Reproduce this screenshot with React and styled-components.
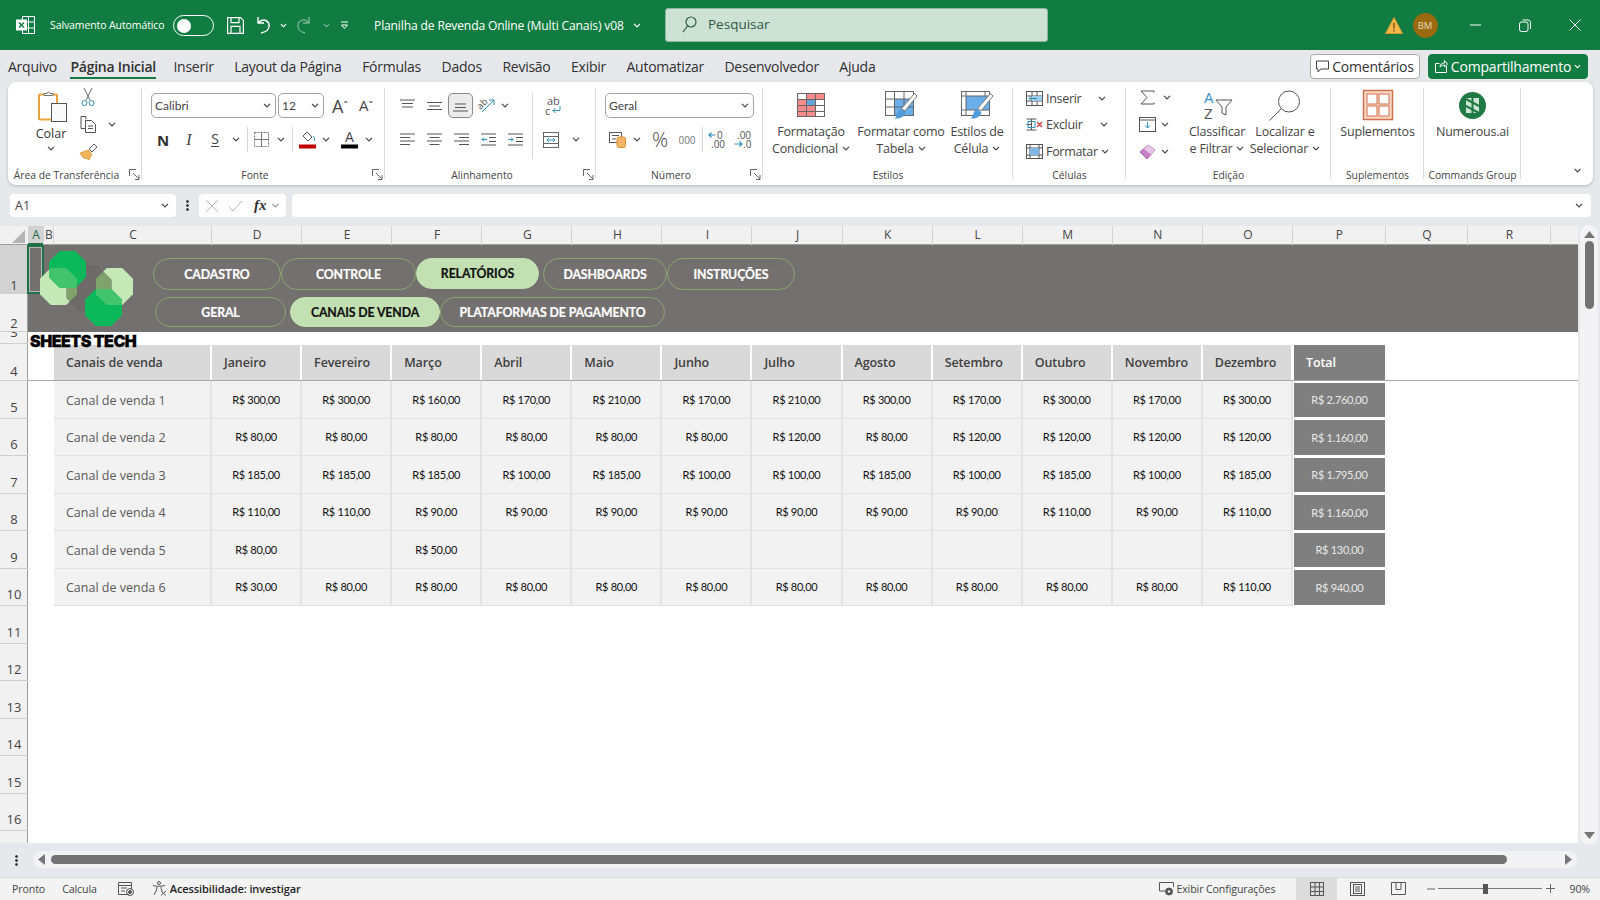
import React from "react";
import styled, { createGlobalStyle } from "styled-components";

const Global = createGlobalStyle`
  html, body { margin: 0; padding: 0; background: #e6e8ec; }
  * { box-sizing: border-box; }
  svg { display: block; flex: none; overflow: visible; }
`;

const UI = `"Open Sans", "Noto Sans", sans-serif`;
const CAL = `Lato, "Open Sans", sans-serif`;

const Page = styled.div`
  width: 1600px; height: 900px; overflow: hidden; display: flex; flex-direction: column;
  background: #e6e8ec; font-family: ${UI}; color: #333;
`;

/* ---------- title bar ---------- */
const TitleBar = styled.header`
  height: 50px; flex: none; background: #107c41; color: #fff; display: flex; align-items: center; padding-left: 16px;
`;
const AutoSave = styled.span`
  font-size: 10.5px; margin: 0 9px 0 15px; width: 114px; white-space: nowrap; letter-spacing: -0.1px;
`;
const Toggle = styled.span`
  width: 41px; height: 21px; border: 1.5px solid #fff; border-radius: 11px; padding: 2px; display: flex; margin-right: 13px;
  &::before { content: ""; width: 14px; height: 14px; margin: 1px 0 0 1px; border-radius: 50%; background: #fff; }
`;
const QuickSlot = styled.span`
  width: ${p => p.$w}px; display: flex; justify-content: center; align-items: center; opacity: ${p => p.$dim ? 0.45 : 1};
`;
const DocTitle = styled.span`
  font-size: 12.1px; white-space: nowrap; width: 258px; margin-left: 15px; letter-spacing: -0.15px;
`;
const SearchBox = styled.div`
  width: 383px; height: 34px; margin-left: 23px; background: #cde2d5; border-radius: 3px; border: 1px solid #8fb5a0;
  display: flex; align-items: center; gap: 11px; padding: 0 0 2px 16px; color: #2f5a43; font-size: 13.5px;
`;
const TitleRight = styled.div`
  margin-left: auto; display: flex; align-items: center;
`;
const Avatar = styled.span`
  width: 25px; height: 25px; border-radius: 50%; background: #9a6a10; color: #e8d8b8; font-size: 9.5px;
  display: flex; align-items: center; justify-content: center; margin: 0 12.5px 0 9.5px;
`;
const WinBtn = styled.span`
  width: ${p => p.$w}px; display: flex; justify-content: center;
`;

/* ---------- tabs ---------- */
const MenuBar = styled.nav`
  height: 32px; flex: none; display: flex; align-items: center; padding-left: 8px; gap: 20.5px;
`;
const MenuItem = styled.span`
  font-size: 14px; line-height: 34px; height: 32px; color: #303030; white-space: nowrap; letter-spacing: -0.25px;
  font-weight: ${p => p.$active ? 600 : 400}; margin-right: ${p => p.$mr || 0}px;
  ${p => p.$active && `box-shadow: inset 0 -3px 0 0 #e6e8ec, inset 0 -5px 0 0 #107c41;`}
`;
const MenuRight = styled.div`
  margin-left: auto; display: flex; gap: 8px; padding-right: 12px;
`;
const CommentBtn = styled.span`
  width: 110px; height: 25px; border-radius: 4px; background: #fff; border: 1px solid #a9a9a9; display: flex; align-items: center;
  justify-content: center; gap: 3px; font-size: 14px; letter-spacing: -0.2px; color: #333;
`;
const ShareBtn = styled(CommentBtn)`
  width: 160px; background: #107c41; border-color: #107c41; color: #fff;
`;

/* ---------- ribbon ---------- */
const Ribbon = styled.div`
  height: 103px; flex: none; margin-left: 8px; width: 1585px; background: #fff; border-radius: 8px;
  box-shadow: 0 1px 3px rgba(0,0,0,.22); display: flex;
`;
const Group = styled.section`
  width: ${p => p.$w}px; flex: none; height: 103px; display: flex; flex-direction: column;
  background: linear-gradient(#dedede, #dedede) no-repeat right 0 top 6px / 1px 91px;
`;
const GroupBody = styled.div`
  height: 84px; flex: none; display: flex; padding-left: ${p => p.$pl || 0}px; padding-top: ${p => p.$pt || 0}px;
`;
const LabelRow = styled.div`
  height: 17px; display: flex; align-items: center; font-size: 10.3px; color: #444;
`;
const LabelText = styled.span`
  flex: 1; text-align: center; white-space: nowrap;
`;
const Launcher = styled.span`
  width: 17px; padding-left: 4px; display: flex; justify-content: flex-start;
`;
const PasteCol = styled.div`
  width: 46px; margin-left: 20px; display: flex; flex-direction: column; align-items: center; padding-top: 8px; font-size: 12.5px;
  & > svg:first-child { margin-left: 4px; }
  & > span { margin-top: 3px; line-height: 17px; }
  & > svg:last-child { margin-top: 4px; }
`;
const ClipCol = styled.div`
  display: grid; grid-template-columns: 28px 20px; grid-auto-rows: 27px; padding-top: 2px; justify-items: center; align-items: center;
`;
const StackCol = styled.div`
  display: flex; flex-direction: column;
  width: ${p => p.$w ? `${p.$w}px` : "auto"};
`;
const ToolRow = styled.div`
  display: flex; align-items: center; height: 25px; margin-top: ${p => p.$mt || 0}px;
`;
const Tool = styled.span`
  width: ${p => p.$w}px; height: 25px; flex: none; display: flex; align-items: center; justify-content: center; color: #444;
  ${p => p.$on && `background:#ececec; border:1px solid #8a8a8a; border-radius:5px;`}
`;
const Letter = styled.span`
  font-family: "Liberation Serif", serif; font-size: ${p => p.$s || 15}px; font-style: ${p => p.$i ? "italic" : "normal"};
  line-height: 1;
`;
const Bold = styled.span`
  font-size: 15px; font-weight: 700; color: #333;
`;
const UnderS = styled.span`
  font-size: 14px; color: #444; border-bottom: 1px solid #444; line-height: 14px;
`;
const Glyph = styled.span`
  font-size: ${p => p.$s}px; color: ${p => p.$c || "#444"}; line-height: 1; font-family: ${p => p.$f || UI};
  font-weight: ${p => p.$wt || 400};
`;
const Divider = styled.span`
  width: ${p => p.$w}px; height: ${p => p.$h || 25}px; flex: none; 
  background: linear-gradient(#d8d8d8, #d8d8d8) no-repeat center / 1px 100%;
`;
const Select = styled.span`
  width: ${p => p.$w}px; height: 25px; flex: none; border: 1px solid #a3a3a3; border-radius: 5px; display: flex; align-items: center;
  justify-content: space-between; padding: 0 4px 0 3px; font-size: 12px; color: #444; margin-right: ${p => p.$mr || 0}px;
  font-family: ${p => p.$f || UI};
`;
const BigButton = styled.div`
  width: ${p => p.$w}px; flex: none; display: flex; flex-direction: column; align-items: center; padding-top: 8px;
`;
const BigIcon = styled.div`
  height: 30px; margin-bottom: 4px; display: flex; align-items: center; justify-content: center;
`;
const BigText = styled.div`
  font-size: 12.5px; line-height: 16.5px; text-align: center; white-space: nowrap; color: #444; letter-spacing: -0.2px;
  & svg { display: inline-block; margin-left: 4px; vertical-align: 2px; }
`;
const CellRow = styled.div`
  height: 26.5px; display: flex; align-items: center; padding-left: 13px; font-size: 12.5px; color: #444; letter-spacing: -0.3px;
`;
const CellLabel = styled.span`
  width: ${p => p.$w}px; margin-left: 3px; white-space: nowrap;
`;
const Collapse = styled.div`
  flex: 1; display: flex; justify-content: flex-end; align-items: flex-end; padding: 0 10px 12px 0;
`;

/* ---------- formula bar ---------- */
const FormulaBar = styled.div`
  height: 23px; flex: none; margin-top: 9px; padding: 0 9px 0 10px; display: flex; align-items: center;
`;
const NameBox = styled.div`
  width: 166px; height: 23px; background: #fff; border-radius: 4px; display: flex; align-items: center; justify-content: space-between;
  padding: 0 5px 0 5px; font-size: 12.5px; color: #444;
`;
const FxDots = styled.span`
  width: 23px; display: flex; justify-content: center;
`;
const FxBox = styled.div`
  width: 87px; height: 23px; background: #fff; border-radius: 4px; display: flex; align-items: center; gap: 9px; padding-left: 6px;
  margin-right: 6px;
`;
const FxText = styled.span`
  font-family: "Liberation Serif", serif; font-style: italic; font-weight: 700; font-size: 15px; color: #333; margin-left: 2px; margin-right: -5px;
`;
const FormulaInput = styled.div`
  flex: 1; height: 23px; background: #fff; border-radius: 4px; display: flex; align-items: center; justify-content: flex-end; padding-right: 6px;
`;

/* ---------- sheet ---------- */
const SheetWrap = styled.div`
  height: 617px; flex: none; margin-top: 9px; display: flex;
`;
const Sheet = styled.div`
  width: 1578px; flex: none; background: #fff; display: flex; flex-direction: column; overflow: hidden;
`;
const ColHeader = styled.div`
  height: 19px; flex: none; display: flex; background: #f1f1f1; box-shadow: inset 0 -1px 0 #9e9e9e;
`;
const Corner = styled.span`
  width: 28px; display: flex; justify-content: flex-end; align-items: flex-end; padding: 0 3px 2px 0;
  &::before { content: ""; border-style: solid; border-width: 0 0 13px 13px; border-color: transparent transparent #b4b4b4 transparent; }
`;
const ColCell = styled.span`
  width: ${p => p.$w}px; flex: none; text-align: center; font-size: 12px; line-height: 18px; color: #444;
  background: ${p => p.$sel ? "#d2d2d2" : "transparent"}; ${p => p.$sel && "color:#1a6b3e;"}
  box-shadow: inset -1px 0 0 #d4d4d4, ${p => p.$sel ? "inset 0 -2px 0 #1f7246" : "inset 0 -1px 0 #9e9e9e"};
`;
const SheetBody = styled.div`
  flex: 1; display: flex; min-height: 0;
`;
const RowHeaders = styled.div`
  width: 28px; flex: none; background: #f1f1f1; box-shadow: inset -1px 0 0 #9e9e9e; overflow: hidden;
`;
const RowHead = styled.div`
  height: ${p => p.$h}px; display: flex; align-items: flex-end; justify-content: center; font-size: 13px; line-height: 17px; color: #444;
  overflow: hidden; padding-bottom: ${p => p.$pb}px;
  background: ${p => p.$sel ? "#d2d2d2" : "transparent"};
  box-shadow: inset 0 -1px 0 #cfcfcf, inset -1px 0 0 #9e9e9e;
`;
const Cells = styled.div`
  flex: 1; min-width: 0; position: relative;
`;
const SelectedCell = styled.span`
  position: absolute; left: -1px; top: 0; width: 17px; height: 49px; border: 2px solid #1f7246; z-index: 1;
  box-shadow: inset 0 0 0 1px rgba(255,255,255,.5);
`;
const Banner = styled.div`
  height: 87px; background: #74706f; display: flex;
`;
const LogoSlot = styled.div`
  position: relative; z-index: 2; width: 125px; flex: none;
`;
const PillRows = styled.div`
  display: flex; flex-direction: column; gap: 7px; padding-top: 13px;
`;
const PillRow = styled.div`
  display: flex; gap: ${p => p.$gap || 0}px; margin-left: ${p => p.$ml || 0}px;
`;
const Pill = styled.span`
  width: ${p => p.$w}px; height: ${p => p.$h || 32}px; border-radius: 17px; display: flex; align-items: center; justify-content: center;
  font-family: ${CAL}; font-weight: 700; font-size: 12.3px; letter-spacing: -0.1px; white-space: nowrap;
  -webkit-text-stroke: 0.2px currentColor;
  border: 1px solid ${p => p.$on ? "#c2e0b2" : "#8aa56d"};
  background: ${p => p.$on ? "#c2e0b2" : "transparent"};
  color: ${p => p.$on ? "#111" : "#fff"};
  margin-left: ${p => p.$ml || 0}px;
`;
const BrandRow = styled.div`
  height: 12px; padding-left: 2px; overflow: visible; position: relative; z-index: 2;
`;
const Brand = styled.span`
  font-family: Inter, sans-serif; font-weight: 900; font-size: 16px; line-height: 12px; color: #000; letter-spacing: -0.5px; white-space: nowrap;
  display: block; padding-top: 3px; height: 12px; -webkit-text-stroke: 0.3px #000;
`;
const TableHead = styled.div`
  height: 37px; display: flex; padding: 1px 0 1px 26px; box-shadow: inset 0 -1px 0 #a8a8a8;
`;
const HeadCell = styled.span`
  width: ${p => p.$w}px; flex: none; margin-right: ${p => p.$total ? 0 : 2}px; margin-left: ${p => p.$total ? 1 : 0}px; height: 35px; padding-left: 12px; display: flex; align-items: center;
  font-size: 12.5px; font-weight: 600; letter-spacing: -0.1px;
  background: ${p => p.$total ? "#7f7f7f" : "#d9d9d9"}; color: ${p => p.$total ? "#fff" : "#404040"};
`;
const DataRow = styled.div`
  height: 37.5px; display: flex; padding-left: 26px;
`;
const LabelCell = styled.span`
  width: 158px; flex: none; background: #f2f2f2; border-right: 2px solid #e4e4e4; border-bottom: 1px solid #e2e2e2;
  padding: 1.5px 0 0 12px; display: flex; align-items: center; font-size: 12.5px; color: #595959;
`;
const ValueCell = styled.span`
  width: 90.08px; flex: none; background: #f2f2f2; border-right: 2px solid #e4e4e4; border-bottom: 1px solid #e2e2e2;
  display: flex; align-items: center; justify-content: center; font-family: ${CAL}; font-size: 11px; letter-spacing: -0.3px; color: #111;
`;
const TotalCell = styled.span`
  width: 91px; flex: none; margin: 1.5px 0 1.5px 1px; background: #7f7f7f; display: flex; align-items: center; justify-content: center;
  font-family: ${CAL}; font-size: 11px; letter-spacing: -0.3px; color: #e8e8e8;
`;
const VScroll = styled.div`
  width: 18px; margin: -1px 0 0 2px; height: 620px; background: #f3f3f5; border-radius: 9px; display: flex; flex-direction: column; align-items: center; padding-top: 6px;
`;
const VThumb = styled.span`
  width: 9px; height: 68px; border-radius: 5px; background: #737373; margin-top: 3px;
`;
const ArrowPush = styled.span`
  margin-top: auto; margin-bottom: 6px;
`;
const HStrip = styled.div`
  height: 34px; flex: none; display: flex; align-items: center; padding-left: 15px;
`;
const DotsCol = styled.span`
  width: 18px; display: flex;
`;
const HPill = styled.div`
  width: 1544px; height: 17px; background: #f3f3f5; border-radius: 9px; display: flex; align-items: center; padding-left: 5px; margin-top: -1px;
`;
const HThumb = styled.span`
  width: 1456px; height: 9px; border-radius: 5px; background: #737373; margin: 0 auto 0 6px;
`;
const HEnd = styled.span`
  margin-right: 5px;
`;

/* ---------- status bar ---------- */
const Status = styled.footer`
  height: 23px; flex: none; background: #f3f3f3; display: flex; align-items: center; color: #444; padding-left: 12px;
  box-shadow: inset 0 1px 0 #d9d9d9;
`;
const StatusText = styled.span`
  margin: 0 ${p => p.$mr || 0}px 0 ${p => p.$ml || 0}px; font-size: ${p => p.$b ? 11 : 10.6}px; font-weight: ${p => p.$b ? 600 : 400}; white-space: nowrap; color: ${p => p.$b ? "#222" : "#444"}; letter-spacing: -0.1px;
`;
const StatusIcon = styled.span`
  margin-right: ${p => p.$mr}px;
`;
const StatusRight = styled.div`
  margin-left: auto; display: flex; align-items: center; height: 23px; padding-right: 10px;
`;
const ViewBtn = styled.span`
  width: 41px; height: 23px; display: flex; align-items: center; justify-content: center; background: ${p => p.$on ? "#dcdcdc" : "transparent"};
`;
const ZoomMinus = styled.span`
  margin-left: 8px;
`;
const Zoom = styled.div`
  width: 104px; height: 9px; margin: 0 4px 0 3px; display: flex; align-items: center; justify-content: flex-start;
  background: linear-gradient(#777, #777) no-repeat center / 100% 1px;
`;
const ZoomThumb = styled.span`
  width: 5px; height: 10px; background: #555; margin-left: 45px;
`;

/* ---------- icon helpers ---------- */
const S = ({ w, h, children, c = "#555", sw = 1 }) => (
  <svg width={w} height={h} viewBox={`0 0 ${w} ${h}`} fill="none" stroke={c} strokeWidth={sw}>{children}</svg>
);
const Chev = ({ c = "#444", w = 8 }) => (
  <svg width={w} height={5} viewBox="0 0 8 5" fill="none" stroke={c} strokeWidth="1.2"><path d="M1 .8 4 3.8 7 .8" /></svg>
);
const Launch = () => (
  <S w={11} h={11} c="#666"><path d="M.5 7V.5H7M4 4l6 6M10 6v4.5H6" /></S>
);
const LineIcon = ({ lines }) => (
  <S w={15} h={13} c="#555">{lines.map(d => <path key={d} d={d} />)}</S>
);
const Indent = ({ flip }) => (
  <S w={15} h={13} c="#555">
    <path d="M0 1h15M0 12h15" />
    <path d={flip ? "M8 4.5h7M8 8.5h7" : "M8 4.5h7M8 8.5h7"} />
    <path stroke="#2f8fb5" d={flip ? "M0 6.5h5M3 4.5l2 2-2 2" : "M1 6.5h5M3 4.5l-2 2 2 2"} />
  </S>
);
const GridBase = ({ children, w = 28, h = 24, cols = [9.5, 18.5], rows = [6.5, 12.5, 18.5] }) => (
  <S w={w} h={h} c="#666">
    {children}
    <rect x=".5" y=".5" width={w - 1} height={h - 1} />
    {cols.map(x => <path key={x} d={`M${x} .5V${h - .5}`} />)}
    {rows.map(y => <path key={y} d={`M.5 ${y}H${w - .5}`} />)}
  </S>
);
const BrushOver = () => (
  <>
    <path d="M29.5 2.5 32 5 20 20l-3.500-2.500z" fill="#fff" stroke="#777" />
    <path d="M15.500 18l5 3.500c-1 4.500-6 6.500-11 6 3-2 2.500-7.500 6-9.500z" fill="#4f9ad8" />
  </>
);

const Logo = () => {
  const oct = (x, y, s = 37) => {
    const k = s * 0.29;
    return `${x + k},${y} ${x + s - k},${y} ${x + s},${y + k} ${x + s},${y + s - k} ${x + s - k},${y + s} ${x + k},${y + s} ${x},${y + s - k} ${x},${y + k}`;
  };
  const tl = oct(21, 6), ll = oct(12, 23), rl = oct(68, 23), br = oct(57, 44), c = oct(39, 22, 44);
  return (
    <svg width={124} height={84} viewBox="0 0 124 84">
      <defs>
        <clipPath id="cl"><polygon points={ll} /></clipPath>
        <clipPath id="cr"><polygon points={rl} /></clipPath>
        <clipPath id="ctl"><polygon points={tl} /></clipPath>
        <clipPath id="cbr"><polygon points={br} /></clipPath>
      </defs>
      <polygon points={ll} fill="#c5e8b7" />
      <polygon points={rl} fill="#c5e8b7" />
      <polygon points={c} fill="#6e6a69" stroke="#666" />
      <polygon points={c} fill="#7fa36a" clipPath="url(#cl)" />
      <polygon points={c} fill="#7fa36a" clipPath="url(#cr)" />
      <polygon points={tl} fill="#0cb95a" />
      <polygon points={br} fill="#0cb95a" />
      <polygon points={ll} fill="#41c46b" clipPath="url(#ctl)" />
      <polygon points={rl} fill="#41c46b" clipPath="url(#cbr)" />
    </svg>
  );
};

const MONTHS = ["Janeiro", "Fevereiro", "Março", "Abril", "Maio", "Junho", "Julho", "Agosto", "Setembro", "Outubro", "Novembro", "Dezembro"];
const DATA = [
  ["Canal de venda 1", [300, 300, 160, 170, 210, 170, 210, 300, 170, 300, 170, 300], "2.760"],
  ["Canal de venda 2", [80, 80, 80, 80, 80, 80, 120, 80, 120, 120, 120, 120], "1.160"],
  ["Canal de venda 3", [185, 185, 185, 100, 185, 100, 100, 185, 100, 185, 100, 185], "1.795"],
  ["Canal de venda 4", [110, 110, 90, 90, 90, 90, 90, 90, 90, 110, 90, 110], "1.160"],
  ["Canal de venda 5", [80, 0, 50, 0, 0, 0, 0, 0, 0, 0, 0, 0], "130"],
  ["Canal de venda 6", [30, 80, 80, 80, 80, 80, 80, 80, 80, 80, 80, 110], "940"],
];
const COLS = [["A", 16, true], ["B", 10], ["C", 158], ...["D", "E", "F", "G", "H", "I", "J", "K", "L", "M", "N", "O"].map(l => [l, 90.08]), ["P", 93], ["Q", 82], ["R", 83]];
const ROWS = [[1, 49, 0, true], [2, 38, 0], [3, 12, 3], [4, 37, 1], ...[5, 6, 7, 8, 9, 10, 11, 12, 13, 14, 15, 16, 17].map(n => [n, 37.5, 3])];
const MENU = [["Arquivo", -7], ["Página Inicial", -3], ["Inserir"], ["Layout da Página"], ["Fórmulas"], ["Dados"], ["Revisão"], ["Exibir"], ["Automatizar"], ["Desenvolvedor"], ["Ajuda"]];

const Blue = "#2f8fb5";
const Dots = () => (
  <S w={3} h={11} c="#333"><circle cx="1.500" cy="1.500" r="1" fill="#333" /><circle cx="1.500" cy="5.500" r="1" fill="#333" /><circle cx="1.500" cy="9.500" r="1" fill="#333" /></S>
);

export default function App() {
  return (
    <Page>
      <Global />
      <TitleBar>
        <S w={19} h={20} c="#fff">
          <rect x="6.5" y="1.5" width="12" height="17" />
          <path d="M12.5 1.5v17M6.5 7h12M6.5 13h12" />
          <rect x=".5" y="5" width="10" height="10" fill="#fff" stroke="#fff" />
          <path d="M3 7.5l5 5M8 7.5l-5 5" stroke="#107c41" strokeWidth="1.5" />
        </S>
        <AutoSave>Salvamento Automático</AutoSave>
        <Toggle />
        <S w={17} h={17} c="#fff" sw={1.2}>
          <path d="M.6.6h13l2.8 2.8v13H.6z" /><path d="M4 .6v5h8v-5M4 16.4v-7h9v7" />
        </S>
        <QuickSlot $w={36}>
          <S w={18} h={18} c="#fff" sw={1.4}><path d="M5 1v6h6M5 7c5-6 12-2 11 4-.5 3-3 5-8 6" /></S>
        </QuickSlot>
        <Chev c="#fff" w={7} />
        <QuickSlot $w={36} $dim>
          <S w={16} h={18} c="#fff" sw={1.3}><path d="M12 1v6H6M12 7C7 1 0 5 1 11c.5 3 3 5 7 6" /></S>
        </QuickSlot>
        <QuickSlot $w={6} $dim><Chev c="#fff" w={7} /></QuickSlot>
        <QuickSlot $w={30}>
          <S w={9} h={9} c="#fff"><path d="M1 1h7M1.5 4l3 3.5L7.5 4z" /></S>
        </QuickSlot>
        <DocTitle>Planilha de Revenda Online (Multi Canais) v08</DocTitle>
        <Chev c="#fff" w={10} />
        <SearchBox>
          <S w={15} h={17} c="#2f5a43" sw={1.2}><circle cx="9" cy="6" r="5" /><path d="M5.5 10 1 16" /></S>
          Pesquisar
        </SearchBox>
        <TitleRight>
          <svg width="18" height="17" viewBox="0 0 18 17"><path d="M9 .5 17.5 16.5H.5z" fill="#f0b849" stroke="#d59a2c" /><path d="M8.2 6h1.6l-.2 6H8.4zM8.2 13h1.6v1.6H8.2z" fill="#8a4a10" /></svg>
          <Avatar>BM</Avatar>
          <WinBtn $w={50}><S w={11} h={2} c="#fff"><path d="M0 1h11" /></S></WinBtn>
          <WinBtn $w={50}><S w={12} h={13} c="#fff"><rect x=".5" y="3" width="8.5" height="9.5" rx="2" /><path d="M3.5 1H9a2.5 2.5 0 0 1 2.5 2.5V10" /></S></WinBtn>
          <WinBtn $w={50}><S w={12} h={12} c="#fff"><path d="M.5.5l11 11M11.5.5l-11 11" /></S></WinBtn>
        </TitleRight>
      </TitleBar>

      <MenuBar>
        {MENU.map(([m, mr]) => (
          <MenuItem key={m} $mr={mr} $active={m === "Página Inicial"}>{m}</MenuItem>
        ))}
        <MenuRight>
          <CommentBtn>
            <S w={13} h={13} c="#444"><path d="M.5 1h12v8H5L2 12V9H.5z" /></S>
            Comentários
          </CommentBtn>
          <ShareBtn>
            <S w={13} h={14} c="#fff"><path d="M.5 4.5h4M.5 4.5v9h11V7M5 8c0-3 2-4 4.5-4V1.5l3 3.5-3 3V6C8 6 6.5 6.500 5 8z" /></S>
            Compartilhamento
            <Chev c="#fff" w={7} />
          </ShareBtn>
        </MenuRight>
      </MenuBar>

      <Ribbon>
        <Group $w={134}>
          <GroupBody>
            <PasteCol>
              <svg width="30" height="32" viewBox="0 0 30 32" fill="none">
                <rect x="1" y="4.5" width="18" height="25" rx="1" stroke="#e8a33d" strokeWidth="2" />
                <path d="M6 5.500V3.500h3a1.500 1.500 0 0 1 3 0h3v2z" fill="#fff" stroke="#777" />
                <rect x="13.500" y="13.500" width="15" height="18" fill="#fafafa" stroke="#555" />
              </svg>
              <span>Colar</span>
              <Chev />
            </PasteCol>
            <ClipCol>
              <S w={14} h={19} c="#666">
                <path d="M3 0l6 12M11 0L5 12" />
                <circle cx="3.500" cy="15" r="2.500" stroke={Blue} /><circle cx="10.500" cy="15" r="2.500" stroke={Blue} />
              </S>
              <span />
              <S w={17} h={17} c="#555"><path d="M6 3.500V.5H1v12h4" /><path d="M5.500 4.500h6l4 4v8h-10z" /><path d="M8 10h5M8 12.500h5" /></S>
              <Chev />
              <svg width="19" height="17" viewBox="0 0 19 17" fill="none">
                <path d="M1 10l8-3 4 4-3 6-3-2-1 1-1-2-1 .5z" fill="#efb45c" stroke="#d98f2f" strokeWidth=".7" />
                <path d="M10 6l5-5 3 3-5 5z" fill="#fff" stroke="#666" />
              </svg>
              <span />
            </ClipCol>
          </GroupBody>
          <LabelRow><LabelText>Área de Transferência</LabelText><Launcher><Launch /></Launcher></LabelRow>
        </Group>

        <Group $w={243}>
          <GroupBody $pl={9} $pt={11}>
            <StackCol>
              <ToolRow>
                <Select $w={125} $mr={2} $f={CAL}>Calibri<Chev /></Select>
                <Select $w={46} $f={CAL}>12<Chev /></Select>
                <Tool $w={32}><Glyph $s={18}>A</Glyph><Glyph $s={11}>ˆ</Glyph></Tool>
                <Tool $w={20}><Glyph $s={15}>A</Glyph><Glyph $s={11}>ˇ</Glyph></Tool>
              </ToolRow>
              <ToolRow $mt={9}>
                <Tool $w={24}><Bold>N</Bold></Tool>
                <Tool $w={28}><Letter $i $s={16}>I</Letter></Tool>
                <Tool $w={24}><UnderS>S</UnderS></Tool>
                <Tool $w={18}><Chev /></Tool>
                <Divider $w={4} />
                <Tool $w={24}><S w={15} h={15} c="#777"><rect x=".5" y=".5" width="14" height="14" strokeDasharray="2 1" /><path d="M7.500 0v15M0 7.500h15" /></S></Tool>
                <Tool $w={16}><Chev /></Tool>
                <Divider $w={6} />
                <Tool $w={24}>
                  <svg width="17" height="18" viewBox="0 0 17 18" fill="none"><path d="M8 1l5 5-4 4-5-5z" stroke="#555" /><path d="M14 5c2 2 2 4 1 5" stroke={Blue} /><rect y="13.500" width="17" height="4" fill="#c00000" /></svg>
                </Tool>
                <Tool $w={14}><Chev /></Tool>
                <Tool $w={32}>
                  <svg width="17" height="19" viewBox="0 0 17 19"><rect y="14.500" width="17" height="4" fill="#000" /><text x="8.500" y="12" textAnchor="middle" fontFamily={UI} fontSize="14" fill="#444">A</text></svg>
                </Tool>
                <Tool $w={8}><Chev /></Tool>
              </ToolRow>
            </StackCol>
          </GroupBody>
          <LabelRow><LabelText>Fonte</LabelText><Launcher><Launch /></Launcher></LabelRow>
        </Group>

        <Group $w={211}>
          <GroupBody $pl={8.5} $pt={11}>
            <StackCol $w={138}>
              <ToolRow>
                <Tool $w={27}><LineIcon lines={["M0 1h15", "M2 4.500h11", "M2 8h11"]} /></Tool>
                <Tool $w={27}><LineIcon lines={["M0 3.500h15", "M2 7h11", "M0 10.500h15"]} /></Tool>
                <Tool $w={25} $on><LineIcon lines={["M2 5h11", "M2 8.500h11", "M0 12h15"]} /></Tool>
                <Tool $w={27}>
                  <svg width="17" height="17" viewBox="0 0 17 17" fill="none">
                    <text x="0" y="9" transform="rotate(-45 6 8)" fontFamily={UI} fontSize="9.500" fill="#555" stroke="none">ab</text>
                    <path d="M4 15 16 3M11 3h5v5" stroke={Blue} />
                  </svg>
                </Tool>
                <Tool $w={10}><Chev /></Tool>
              </ToolRow>
              <ToolRow $mt={9}>
                <Tool $w={27}><LineIcon lines={["M0 1h15", "M0 4.500h10", "M0 8h15", "M0 11.500h10"]} /></Tool>
                <Tool $w={27}><LineIcon lines={["M0 1h15", "M2.500 4.500h10", "M0 8h15", "M2.500 11.500h10"]} /></Tool>
                <Tool $w={27}><LineIcon lines={["M0 1h15", "M5 4.500h10", "M0 8h15", "M5 11.500h10"]} /></Tool>
                <Tool $w={27}><Indent /></Tool>
                <Tool $w={27}><Indent flip /></Tool>
              </ToolRow>
            </StackCol>
            <Divider $w={1} $h={66} />
            <StackCol>
              <ToolRow>
                <Tool $w={40}>
                  <svg width="16" height="20" viewBox="0 0 16 20" fill="none">
                    <text x="2" y="9" fontFamily={UI} fontSize="11" fill="#555" stroke="none">ab</text>
                    <text x="0" y="18.500" fontFamily={UI} fontSize="11" fill="#555" stroke="none">c</text>
                    <path d="M15 10v4.500H8M10.500 12 8 14.500 10.500 17" stroke={Blue} />
                  </svg>
                </Tool>
              </ToolRow>
              <ToolRow $mt={9}>
                <Tool $w={36}>
                  <svg width="16" height="16" viewBox="0 0 16 16" fill="none"><rect x=".5" y=".5" width="15" height="15" stroke="#666" /><path d="M.5 4.500h15M.5 11.500h15" stroke="#666" /><path d="M4 8h8M6 6 4 8l2 2M10 6l2 2-2 2" stroke={Blue} /></svg>
                </Tool>
                <Tool $w={14}><Chev /></Tool>
              </ToolRow>
            </StackCol>
          </GroupBody>
          <LabelRow><LabelText>Alinhamento</LabelText><Launcher><Launch /></Launcher></LabelRow>
        </Group>

        <Group $w={167}>
          <GroupBody $pl={9} $pt={11}>
            <StackCol>
              <ToolRow><Select $w={149} $f={CAL}>Geral<Chev /></Select></ToolRow>
              <ToolRow $mt={9}>
                <Tool $w={26}>
                  <svg width="18" height="16" viewBox="0 0 18 16" fill="none"><rect x=".5" y=".5" width="12" height="10" stroke="#555" /><path d="M3 3.500h7M3 7h4" stroke="#555" /><rect x="8" y="5" width="8.500" height="10.500" rx="2" fill="#f3b467" stroke="#d98f2f" /></svg>
                </Tool>
                <Tool $w={12}><Chev /></Tool>
                <Tool $w={34}><Glyph $s={20} $wt={300}>%</Glyph></Tool>
                <Tool $w={20}><Glyph $s={10} $c="#777">000</Glyph></Tool>
                <Divider $w={10} />
                <Tool $w={18}>
                  <svg width="16" height="17" viewBox="0 0 16 17" fill="none"><text x="9" y="8" fontFamily={UI} fontSize="10" fill="#555" stroke="none">0</text><text x="3" y="17" fontFamily={UI} fontSize="10" fill="#555" stroke="none">.00</text><path d="M7.500 4H1M3.500 1.500 1 4l2.500 2.500" stroke={Blue} strokeWidth="1.200" /></svg>
                </Tool>
                <Tool $w={34}>
                  <svg width="16" height="17" viewBox="0 0 16 17" fill="none"><text x="3" y="8" fontFamily={UI} fontSize="10" fill="#555" stroke="none">.00</text><text x="9" y="17" fontFamily={UI} fontSize="10" fill="#555" stroke="none">.0</text><path d="M.5 13H8M5.500 10.500 8 13l-2.500 2.500" stroke={Blue} strokeWidth="1.200" /></svg>
                </Tool>
              </ToolRow>
            </StackCol>
          </GroupBody>
          <LabelRow><LabelText>Número</LabelText><Launcher><Launch /></Launcher></LabelRow>
        </Group>

        <Group $w={250}>
          <GroupBody>
            <BigButton $w={96}>
              <BigIcon>
                <GridBase>
                  <rect x="9.500" y="1" width="18" height="5.500" fill="#f98b8b" stroke="none" />
                  <rect x="1" y="6.500" width="8.500" height="6" fill="#f98b8b" stroke="none" />
                  <rect x="9.500" y="6.500" width="9" height="6" fill="#6aa5dc" stroke="none" />
                  <rect x="1" y="12.500" width="17.500" height="6" fill="#f98b8b" stroke="none" />
                  <rect x="1" y="18.500" width="17.500" height="5" fill="#f98b8b" stroke="none" />
                </GridBase>
              </BigIcon>
              <BigText>Formatação</BigText>
              <BigText>Condicional<Chev /></BigText>
            </BigButton>
            <BigButton $w={84}>
              <BigIcon>
                <svg width="32" height="28" viewBox="0 0 32 28" fill="none">
                  <rect x="10" y="8" width="19" height="16" fill="#6aaeea" />
                  <rect x=".5" y=".5" width="28" height="24" stroke="#666" />
                  <path d="M9.500 .5v24M19 .5v24M.5 8h28M.5 16h28" stroke="#666" />
                  <BrushOver />
                </svg>
              </BigIcon>
              <BigText>Formatar como</BigText>
              <BigText>Tabela<Chev /></BigText>
            </BigButton>
            <BigButton $w={68}>
              <BigIcon>
                <svg width="32" height="28" viewBox="0 0 32 28" fill="none">
                  <rect x="5" y="5" width="23" height="14" fill="#6aaeea" />
                  <rect x=".5" y=".5" width="28" height="24" stroke="#666" />
                  <path d="M.5 5h28M.5 19h28M5 .5v24M24 .5V5" stroke="#666" />
                  <BrushOver />
                </svg>
              </BigIcon>
              <BigText>Estilos de</BigText>
              <BigText>Célula<Chev /></BigText>
            </BigButton>
          </GroupBody>
          <LabelRow><LabelText>Estilos</LabelText></LabelRow>
        </Group>

        <Group $w={113}>
          <GroupBody $pt={3}>
            <StackCol>
              <CellRow>
                <svg width="17" height="15" viewBox="0 0 17 15" fill="none"><rect x=".5" y=".5" width="16" height="14" stroke="#555" /><path d="M6 .5v14M11 .5v14M.5 5h16M.5 10h16" stroke="#555" /><rect x="6" y="5" width="10" height="5" fill="#9cc9ec" /><path d="M11 7.500H3M5 5.500l-2 2 2 2" stroke={Blue} /></svg>
                <CellLabel $w={52}>Inserir</CellLabel><Chev />
              </CellRow>
              <CellRow>
                <svg width="17" height="15" viewBox="0 0 17 15" fill="none"><path d="M.5 2h10M.5 13h10M5.500 2v11M.5 7.500h5" stroke="#555" /><rect x="2" y="4.500" width="7" height="6" stroke={Blue} /><path d="M11 5l5 5M16 5l-5 5" stroke="#d23b3b" strokeWidth="1.300" /></svg>
                <CellLabel $w={54}>Excluir</CellLabel><Chev />
              </CellRow>
              <CellRow>
                <svg width="17" height="16" viewBox="0 0 17 16" fill="none"><rect x=".5" y="1.500" width="16" height="14" stroke="#555" /><path d="M.5 5h16M.5 12h16M4 1.500v14M13 1.500v14" stroke="#555" /><rect x="4" y="5" width="9" height="7" fill="#7fb8e6" /></svg>
                <CellLabel $w={55}>Formatar</CellLabel><Chev />
              </CellRow>
            </StackCol>
          </GroupBody>
          <LabelRow><LabelText>Células</LabelText></LabelRow>
        </Group>

        <Group $w={205}>
          <GroupBody $pl={8}>
            <StackCol $w={46}>
              <ToolRow $mt={3}><Tool $w={26}><S w={14} h={15} c="#555"><path d="M14 2.500V1H1l6 6.500L1 14h13v-1.500" /></S></Tool><Tool $w={14}><Chev /></Tool></ToolRow>
              <ToolRow $mt={2}><Tool $w={26}><svg width="17" height="15" viewBox="0 0 17 15" fill="none"><rect x=".5" y=".5" width="16" height="14" stroke="#555" /><path d="M.5 3h16" stroke="#555" /><path d="M8.500 5v6M6 8.500l2.500 2.500L11 8.500" stroke={Blue} /></svg></Tool><Tool $w={10}><Chev /></Tool></ToolRow>
              <ToolRow $mt={2}><Tool $w={26}><svg width="17" height="16" viewBox="0 0 17 16"><path d="M1 8 9 1l7 5-8 9z" fill="#c77fc7" stroke="#9a4f9a" strokeWidth=".8" /><path d="M9 1l7 5-4 4.500L5 5z" fill="#e7c6e7" /></svg></Tool><Tool $w={10}><Chev /></Tool></ToolRow>
            </StackCol>
            <BigButton $w={74}>
              <BigIcon>
                <svg width="32" height="30" viewBox="0 0 32 30" fill="none">
                  <text x="3" y="13" fontFamily={UI} fontSize="15" fill="#3c8fd0" stroke="none">A</text>
                  <text x="3" y="29" fontFamily={UI} fontSize="15" fill="#555" stroke="none">Z</text>
                  <path d="M15 10h16l-6 7v8l-4-2v-6z" stroke="#555" />
                </svg>
              </BigIcon>
              <BigText>Classificar</BigText>
              <BigText>e Filtrar<Chev /></BigText>
            </BigButton>
            <BigButton $w={62}>
              <BigIcon>
                <svg width="32" height="31" viewBox="0 0 32 31" fill="none">
                  <circle cx="20" cy="11.500" r="10.500" stroke="#555" />
                  <path d="M12 19 .5 30.500" stroke="#555" />
                </svg>
              </BigIcon>
              <BigText>Localizar e</BigText>
              <BigText>Selecionar<Chev /></BigText>
            </BigButton>
          </GroupBody>
          <LabelRow><LabelText>Edição</LabelText></LabelRow>
        </Group>

        <Group $w={93}>
          <GroupBody>
            <BigButton $w={93}>
              <BigIcon>
                <svg width="30" height="30" viewBox="0 0 30 30" fill="none" stroke="#d2714d"><rect x=".5" y=".5" width="29" height="29" fill="#f8d8c6" strokeWidth="1.500" /><rect x="4" y="4" width="10" height="10" fill="#fff" /><rect x="16" y="4" width="10" height="10" fill="#fff" /><rect x="4" y="16" width="10" height="10" fill="#fff" /><rect x="16" y="16" width="10" height="10" fill="#fff" /></svg>
              </BigIcon>
              <BigText>Suplementos</BigText>
            </BigButton>
          </GroupBody>
          <LabelRow><LabelText>Suplementos</LabelText></LabelRow>
        </Group>

        <Group $w={97}>
          <GroupBody>
            <BigButton $w={97}>
              <BigIcon>
                <svg width="27" height="27" viewBox="0 0 27 27" fill="none">
                  <circle cx="13.500" cy="13.500" r="13.500" fill="#1f7a43" />
                  <path d="M7 6h5.500v15H7zM14.500 6H20v15h-5.500z" fill="#cfe5d6" />
                  <path d="M7 7l13 7M7 14l13 7" stroke="#1f7a43" strokeWidth="2" />
                </svg>
              </BigIcon>
              <BigText>Numerous.ai</BigText>
            </BigButton>
          </GroupBody>
          <LabelRow><LabelText>Commands Group</LabelText></LabelRow>
        </Group>

        <Collapse><Chev w={11} /></Collapse>
      </Ribbon>

      <FormulaBar>
        <NameBox>A1<Chev w={12} /></NameBox>
        <FxDots><Dots /></FxDots>
        <FxBox>
          <S w={14} h={14} c="#b5b5b5"><path d="M1 1l12 12M13 1 1 13" /></S>
          <S w={15} h={12} c="#b5b5b5"><path d="M1 7l4 4L14 1" /></S>
          <FxText>fx</FxText>
          <Chev c="#999" w={9} />
        </FxBox>
        <FormulaInput><Chev w={12} /></FormulaInput>
      </FormulaBar>

      <SheetWrap>
        <Sheet>
          <ColHeader>
            <Corner />
            {COLS.map(([l, w, sel]) => <ColCell key={l} $w={w} $sel={sel}>{l}</ColCell>)}
          </ColHeader>
          <SheetBody>
            <RowHeaders>
              {ROWS.map(([n, h, pb, sel]) => <RowHead key={n} $h={h} $pb={pb} $sel={sel}>{n}</RowHead>)}
            </RowHeaders>
            <Cells>
              <SelectedCell />
              <Banner>
                <LogoSlot><Logo /></LogoSlot>
                <PillRows>
                  <PillRow>
                    <Pill $w={128}>CADASTRO</Pill>
                    <Pill $w={135}>CONTROLE</Pill>
                    <Pill $w={123} $h={31} $on>RELATÓRIOS</Pill>
                    <Pill $w={124} $ml={4}>DASHBOARDS</Pill>
                    <Pill $w={128}>INSTRUÇÕES</Pill>
                  </PillRow>
                  <PillRow $ml={2}>
                    <Pill $w={131} $h={30}>GERAL</Pill>
                    <Pill $w={150} $h={30} $ml={4} $on>CANAIS DE VENDA</Pill>
                    <Pill $w={225} $h={30}>PLATAFORMAS DE PAGAMENTO</Pill>
                  </PillRow>
                </PillRows>
              </Banner>
              <BrandRow><Brand>SHEETS TECH</Brand></BrandRow>
              <TableHead>
                <HeadCell $w={156}>Canais de venda</HeadCell>
                {MONTHS.map(m => <HeadCell key={m} $w={88.08}>{m}</HeadCell>)}
                <HeadCell $w={91} $total>Total</HeadCell>
              </TableHead>
              {DATA.map(([name, vals, total]) => (
                <DataRow key={name}>
                  <LabelCell>{name}</LabelCell>
                  {vals.map((v, i) => <ValueCell key={i}>{v ? `R$ ${v},00` : ""}</ValueCell>)}
                  <TotalCell>R$ {total},00</TotalCell>
                </DataRow>
              ))}
            </Cells>
          </SheetBody>
        </Sheet>
        <VScroll>
          <S w={11} h={7} c="#777"><path d="M5.500 0 11 7H0z" fill="#777" stroke="none" /></S>
          <VThumb />
          <ArrowPush><S w={11} h={7} c="#777"><path d="M5.500 7 11 0H0z" fill="#777" stroke="none" /></S></ArrowPush>
        </VScroll>
      </SheetWrap>

      <HStrip>
        <DotsCol><Dots /></DotsCol>
        <HPill>
          <S w={7} h={11}><path d="M0 5.500 7 0v11z" fill="#777" stroke="none" /></S>
          <HThumb />
          <HEnd><S w={7} h={11}><path d="M7 5.500 0 0v11z" fill="#777" stroke="none" /></S></HEnd>
        </HPill>
      </HStrip>

      <Status>
        <StatusText $mr={17}>Pronto</StatusText>
        <StatusText $mr={21}>Calcula</StatusText>
        <StatusIcon $mr={18}>
          <S w={16} h={14} c="#555"><path d="M11 12.500H.5V.5h13v7M.5 3.500h13M3 6h6M3 9h4" /><circle cx="12" cy="10" r="3.500" /><circle cx="12" cy="10" r="1.500" fill="#555" /></S>
        </StatusIcon>
        <StatusIcon $mr={3}>
          <S w={15} h={15} c="#555"><circle cx="7" cy="2" r="1.500" /><path d="M1 4.500c3 1 8 1 12 0M5 6l-.5 3L2 14M9 6l.5 3 1 1M9 10l5 4.500M14 10l-5 4.500" /></S>
        </StatusIcon>
        <StatusText $b>Acessibilidade: investigar</StatusText>
        <StatusRight>
          <StatusIcon $mr={2}>
            <S w={15} h={14} c="#555"><path d="M6 9H.5V.5h14V5" /><circle cx="10" cy="9.500" r="3.500" fill="#555" /><circle cx="10" cy="9.500" r="1.200" fill="#f3f3f3" stroke="none" /></S>
          </StatusIcon>
          <StatusText $mr={21}>Exibir Configurações</StatusText>
          <ViewBtn $on><S w={14} h={14} c="#555"><rect x=".5" y=".5" width="13" height="13" /><path d="M5 .5v13M9.500 .5v13M.5 5h13M.5 9.500h13" /></S></ViewBtn>
          <ViewBtn><S w={15} h={14} c="#555"><rect x=".5" y=".5" width="14" height="13" /><rect x="3.500" y="2.500" width="8" height="9" /><path d="M5 5h5M5 7h5M5 9h5" /></S></ViewBtn>
          <ViewBtn><S w={15} h={14} c="#555"><path d="M.5 .5h14v12H.5zM5 .5v7h5v-7" /></S></ViewBtn>
          <ZoomMinus><S w={8} h={2} c="#666"><path d="M0 1h8" /></S></ZoomMinus>
          <Zoom><ZoomThumb /></Zoom>
          <S w={9} h={9} c="#666"><path d="M0 4.500h9M4.500 0v9" /></S>
          <StatusText $ml={14}>90%</StatusText>
        </StatusRight>
      </Status>
    </Page>
  );
}
